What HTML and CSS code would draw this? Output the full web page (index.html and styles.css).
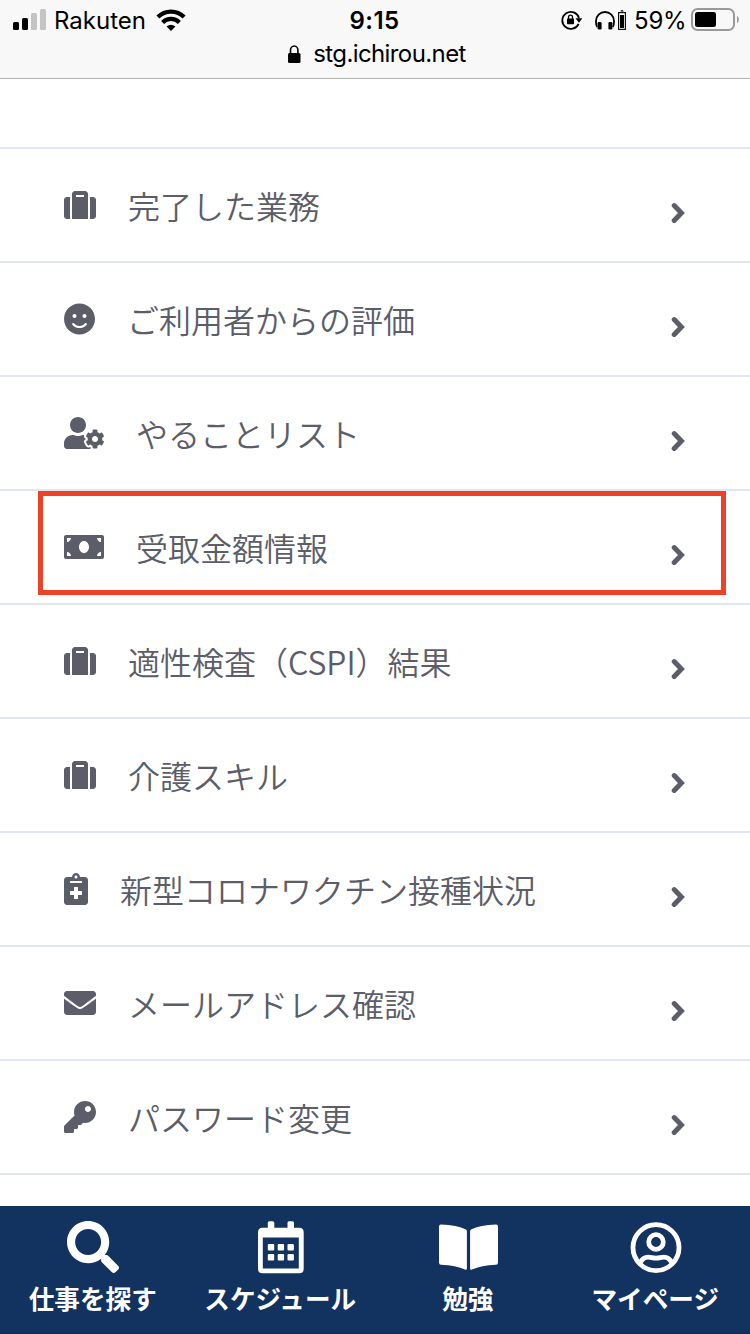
FILE: index.html
```html
<!DOCTYPE html>
<html lang="ja">
<head>
<meta charset="utf-8">
<title>マイページ</title>
<link rel="stylesheet" href="styles.css">
</head>
<body>
<svg class="defs" width="0" height="0">
  <symbol id="suitcase" viewBox="0 0 512 512"><path d="M128 480h256V80c0-26.5-21.5-48-48-48H176c-26.5 0-48 21.5-48 48v400zm64-384h128v32H192V96zm320 80v256c0 26.5-21.5 48-48 48h-48V128h48c26.5 0 48 21.5 48 48zM96 480H48c-26.5 0-48-21.5-48-48V176c0-26.5 21.5-48 48-48h48v352z"/></symbol>
  <symbol id="chevron" viewBox="0 0 14 22"><path d="M3.2 3.6 10.4 11l-7.200 7.400" fill="none" stroke="currentColor" stroke-width="5" stroke-linecap="round"/></symbol>
</svg>
<header class="browser">
  <div class="status">
    <div class="status-left">
      <svg class="signal" width="33" height="21" viewBox="0 0 33 21"><rect y="13" width="6" height="8" rx="1.5"/><rect x="9" y="9" width="6" height="12" rx="1.5"/><rect x="18" y="4" width="6" height="17" rx="1.5" fill="#c4c4c4"/><rect x="27" width="6" height="21" rx="1.5" fill="#c4c4c4"/></svg>
      <span class="carrier">Rakuten</span>
      <svg class="wifi" width="30" height="22" viewBox="0 0 30 22"><g fill="none" stroke="#000" stroke-width="4.200"><path d="M1.900 8a18.500 18.500 0 0 1 26.200 0"/><path d="M6.600 13.400a12 12 0 0 1 16.800 0"/></g><path d="M10.600 17.600a7 7 0 0 1 8.800 0L15 22z"/></svg>
    </div>
    <div class="clock">9:15</div>
    <div class="status-right">
      <svg class="rotation" width="21" height="20" viewBox="0 0 21 20"><path d="M17.600 13.800A8.500 8.500 0 1 1 18 8" fill="none" stroke="#000" stroke-width="1.800"/><path d="M14.500 8.200h7L18 12.800z"/><rect x="6" y="8.500" width="7" height="5.800" rx=".7"/><path d="M7.500 9V7.200a2 2 0 0 1 4 0V9" fill="none" stroke="#000" stroke-width="1.300"/></svg>
      <svg class="headphones" width="20" height="19" viewBox="0 0 20 19"><path d="M2.200 16C.7 14 1 11.500 1 10a9 9 0 0 1 18 0c0 1.500.3 4-1.200 6" fill="none" stroke="#000" stroke-width="1.800"/><rect x="2.600" y="11" width="4" height="7.500" rx="1.300"/><rect x="13.400" y="11" width="4" height="7.500" rx="1.300"/></svg>
      <svg class="device" width="8" height="20" viewBox="0 0 8 20"><path d="M2.500 1.500a1.500 1.500 0 0 1 3 0z"/><rect x=".6" y="2.600" width="6.800" height="16.800" fill="none" stroke="#000" stroke-width="1.100"/><rect x="2" y="5" width="4" height="13"/></svg>
      <span class="percent">59%</span>
      <svg class="battery" width="48" height="24" viewBox="0 0 48 24"><rect x="1" y="1" width="42" height="21" rx="5.500" fill="none" stroke="#999" stroke-width="2"/><rect x="4" y="4" width="21" height="15" rx="2.500"/><path d="M46 8c2.500 1 2.500 6 0 7z" fill="#999"/></svg>
    </div>
  </div>
  <div class="address">
    <svg width="13" height="18" viewBox="0 0 13 18"><rect y="8" width="12.500" height="10" rx="1.500"/><path d="M2.500 9V5.200a3.700 4.200 0 0 1 7.400 0V9" fill="none" stroke="#000" stroke-width="1.600"/></svg>
    <span>stg.ichirou.net</span>
  </div>
</header>
<main class="menu">
  <div class="item"><svg class="icon" width="32" height="32"><use href="#suitcase"/></svg><span class="label">完了した業務</span><svg class="chevron" width="14" height="22"><use href="#chevron"/></svg></div>
  <div class="item"><svg class="icon" width="31" height="32" viewBox="0 0 496 512"><path d="M248 8C111 8 0 119 0 256s111 248 248 248 248-111 248-248S385 8 248 8zm80 168c17.700 0 32 14.300 32 32s-14.300 32-32 32-32-14.300-32-32 14.300-32 32-32zm-160 0c17.700 0 32 14.300 32 32s-14.300 32-32 32-32-14.300-32-32 14.300-32 32-32zm194.800 170.200C334.300 380.400 292.500 400 248 400s-86.300-19.600-114.800-53.800c-13.600-16.300 11-36.700 24.600-20.500 22.400 26.900 55.200 42.200 90.200 42.200s67.800-15.400 90.200-42.200c13.400-16.200 38.100 4.200 24.600 20.500z"/></svg><span class="label">ご利用者からの評価</span><svg class="chevron" width="14" height="22"><use href="#chevron"/></svg></div>
  <div class="item"><svg class="icon" width="40" height="32" viewBox="0 0 640 512"><path d="M610.5 373.3c2.6-14.1 2.6-28.5 0-42.6l25.8-14.9c3-1.7 4.3-5.2 3.3-8.5-6.7-21.6-18.2-41.2-33.2-57.4-2.3-2.5-6-3.1-9-1.4l-25.8 14.9c-10.9-9.3-23.4-16.5-36.9-21.3v-29.8c0-3.4-2.4-6.4-5.7-7.1-22.3-5-45-4.8-66.2 0-3.3.7-5.7 3.7-5.7 7.1v29.8c-13.5 4.8-26 12-36.9 21.3l-25.8-14.9c-2.9-1.7-6.7-1.1-9 1.4-15 16.2-26.5 35.8-33.2 57.4-1 3.3.4 6.8 3.3 8.5l25.8 14.9c-2.6 14.1-2.6 28.5 0 42.6l-25.8 14.9c-3 1.7-4.3 5.2-3.3 8.5 6.7 21.6 18.2 41.1 33.2 57.4 2.3 2.5 6 3.1 9 1.4l25.8-14.9c10.9 9.3 23.4 16.5 36.9 21.3v29.8c0 3.4 2.4 6.4 5.7 7.1 22.3 5 45 4.8 66.2 0 3.3-.7 5.7-3.7 5.7-7.1v-29.8c13.5-4.8 26-12 36.9-21.3l25.8 14.9c2.9 1.7 6.7 1.1 9-1.4 15-16.2 26.5-35.8 33.2-57.4 1-3.3-.4-6.8-3.3-8.5l-25.8-14.9zM496 400.5c-26.8 0-48.5-21.8-48.5-48.5s21.8-48.5 48.5-48.5 48.5 21.8 48.5 48.5-21.7 48.500-48.500 48.500zM224 256c70.700 0 128-57.300 128-128S294.700 0 224 0 96 57.300 96 128s57.300 128 128 128zm201.200 226.500c-2.300-1.200-4.600-2.600-6.800-3.900l-7.900 4.600c-6 3.400-12.800 5.300-19.600 5.300-10.900 0-21.400-4.600-28.900-12.600-18.300-19.800-32.300-43.900-40.200-69.600-5.500-17.700 1.900-36.400 17.900-45.700l7.900-4.600c-.1-2.600-.1-5.200 0-7.800l-7.900-4.600c-16-9.200-23.400-28-17.900-45.700.9-2.900 2.200-5.800 3.200-8.700-3.800-.3-7.500-1.200-11.400-1.200h-16.700c-22.200 10.200-46.900 16-72.900 16s-50.600-5.800-72.900-16h-16.700C60.200 288 0 348.200 0 422.400V464c0 26.500 21.500 48 48 48h352c10.100 0 19.500-3.200 27.200-8.500-1.200-3.800-2-7.700-2-11.800v-9.200z"/></svg><span class="label">やることリスト</span><svg class="chevron" width="14" height="22"><use href="#chevron"/></svg></div>
  <div class="item marked"><svg class="icon" width="40" height="32" viewBox="0 0 640 512"><path d="M608 64H32C14.330 64 0 78.330 0 96v320c0 17.670 14.330 32 32 32h576c17.670 0 32-14.330 32-32V96c0-17.670-14.330-32-32-32zM48 400v-64c35.350 0 64 28.650 64 64H48zm0-224v-64h64c0 35.350-28.650 64-64 64zm272 176c-44.190 0-80-42.990-80-96 0-53.020 35.820-96 80-96s80 42.980 80 96c0 53.030-35.830 96-80 96zm272 48h-64c0-35.350 28.650-64 64-64v64zm0-224c-35.350 0-64-28.650-64-64h64v64z"/></svg><span class="label">受取金額情報</span><svg class="chevron" width="14" height="22"><use href="#chevron"/></svg></div>
  <div class="item"><svg class="icon" width="32" height="32"><use href="#suitcase"/></svg><span class="label">適性検査（CSPI）結果</span><svg class="chevron" width="14" height="22"><use href="#chevron"/></svg></div>
  <div class="item"><svg class="icon" width="32" height="32"><use href="#suitcase"/></svg><span class="label">介護スキル</span><svg class="chevron" width="14" height="22"><use href="#chevron"/></svg></div>
  <div class="item"><svg class="icon" width="24" height="32" viewBox="0 0 384 512"><path d="M336 64h-80c0-35.300-28.700-64-64-64s-64 28.700-64 64H48C21.500 64 0 85.500 0 112v352c0 26.500 21.500 48 48 48h288c26.500 0 48-21.500 48-48V112c0-26.500-21.500-48-48-48zM192 40c13.300 0 24 10.700 24 24s-10.700 24-24 24-24-10.700-24-24 10.700-24 24-24zm96 304c0 4.400-3.600 8-8 8h-56v56c0 4.400-3.600 8-8 8h-48c-4.400 0-8-3.600-8-8v-56h-56c-4.400 0-8-3.600-8-8v-48c0-4.400 3.600-8 8-8h56v-56c0-4.400 3.600-8 8-8h48c4.400 0 8 3.600 8 8v56h56c4.400 0 8 3.600 8 8v48zm0-192c0 4.400-3.600 8-8 8H104c-4.400 0-8-3.600-8-8v-16c0-4.400 3.600-8 8-8h176c4.400 0 8 3.600 8 8v16z"/></svg><span class="label">新型コロナワクチン接種状況</span><svg class="chevron" width="14" height="22"><use href="#chevron"/></svg></div>
  <div class="item"><svg class="icon" width="32" height="32" viewBox="0 0 512 512"><path d="M502.300 190.800c3.900-3.100 9.700-.2 9.700 4.700V400c0 26.500-21.500 48-48 48H48c-26.500 0-48-21.500-48-48V195.600c0-5 5.700-7.800 9.700-4.700 22.400 17.400 52.100 39.500 154.100 113.600 21.100 15.400 56.700 47.800 92.200 47.600 35.700.3 72-32.800 92.300-47.600 102-74.100 131.600-96.300 154-113.700zM256 320c23.200.4 56.600-29.200 73.400-41.400 132.700-96.300 142.800-104.700 173.400-128.700 5.800-4.500 9.200-11.500 9.200-18.900v-19c0-26.500-21.500-48-48-48H48c-26.500 0-48 21.500-48 48v19c0 7.400 3.400 14.300 9.200 18.900 30.600 23.900 40.700 32.400 173.400 128.700 16.800 12.200 50.200 41.800 73.400 41.400z"/></svg><span class="label">メールアドレス確認</span><svg class="chevron" width="14" height="22"><use href="#chevron"/></svg></div>
  <div class="item"><svg class="icon" width="32" height="32" viewBox="0 0 512 512"><path d="M512 176C512 273.200 433.200 352 336 352c-11.220 0-22.190-1.060-32.830-3.070l-24.010 27.010A24 24 0 0 1 261.220 384H224v40c0 13.260-10.740 24-24 24h-40v40c0 13.260-10.740 24-24 24H24c-13.260 0-24-10.740-24-24v-78.060c0-6.370 2.530-12.470 7.030-16.970l161.800-161.800C163.100 213.800 160 195.270 160 176 160 78.800 238.800 0 336 0 433.490 0 512 78.510 512 176zM336 128c0 26.510 21.490 48 48 48s48-21.490 48-48-21.490-48-48-48-48 21.490-48 48z"/></svg><span class="label">パスワード変更</span><svg class="chevron" width="14" height="22"><use href="#chevron"/></svg></div>
</main>
<nav class="tabs">
  <div class="tab"><svg class="search" width="52" height="53" viewBox="0 0 512 522"><path d="M505 442.700L405.300 343c-4.500-4.500-10.600-7-17-7H372c27.600-35.300 44-79.700 44-128C416 93.100 322.900 0 208 0S0 93.100 0 208s93.100 208 208 208c48.300 0 92.700-16.400 128-44v16.300c0 6.400 2.500 12.500 7 17l99.700 99.700c9.400 9.400 24.600 9.400 33.900 0l28.300-28.300c9.400-9.400 9.400-24.600.1-34zM208 336c-70.700 0-128-57.200-128-128 0-70.700 57.200-128 128-128 70.700 0 128 57.200 128 128 0 70.700-57.200 128-128 128z"/></svg><span>仕事を探す</span></div>
  <div class="tab"><svg width="46" height="53" viewBox="0 0 46 53"><path fill-rule="evenodd" d="M4.500 6.800h5.300V1.800Q9.800.3 11.300.3h3.500q1.500 0 1.500 1.500v5H29.500v-5q0-1.500 1.500-1.500h3.500q1.500 0 1.500 1.500v5h5.200q4.500 0 4.500 4.500v36.500q0 4.500-4.500 4.500H4.500Q0 52.300 0 47.800V11.300q0-4.500 4.500-4.500zM4.800 16.500v31h36v-31z"/><g><rect x="9.800" y="23" width="6.400" height="6.600" rx="1"/><rect x="19.700" y="23" width="6.400" height="6.600" rx="1"/><rect x="29.500" y="23" width="6.400" height="6.600" rx="1"/><rect x="9.800" y="33" width="6.400" height="6.600" rx="1"/><rect x="19.700" y="33" width="6.400" height="6.600" rx="1"/><rect x="29.500" y="33" width="6.400" height="6.600" rx="1"/></g></svg><span>スケジュール</span></div>
  <div class="tab"><svg width="59" height="53" viewBox="0 0 59 53"><path d="M0 5.400Q0 3.600 2 3.600 18 4.200 27 8.600q.9.500.9 1.600v37.200q0 2-1.900 1.200Q17 44.300 2 43.700q-2-.1-2-2zM59 5.400q0-1.800-2-1.800-16 .6-25 5-.9.500-.9 1.600v37.200q0 2 1.900 1.200 9-4.300 24-4.900 2-.1 2-2z"/></svg><span>勉強</span></div>
  <div class="tab"><svg width="52" height="53" viewBox="0 0 52 53"><g fill="none" stroke="#fff"><circle cx="26" cy="26.600" r="23" stroke-width="4.800"/><circle cx="26" cy="21" r="7.300" stroke-width="4.800"/><path d="M10.500 41.500c1.500-3.500 4-5.400 7.700-5.400 2.800 0 4.300 1 7.800 1s5-1 7.800-1c3.700 0 6.200 1.900 7.700 5.400" stroke-width="4.800"/></g></svg><span>マイページ</span></div>
</nav>
</body>
</html>
```
FILE: styles.css
```css
*, *::after { box-sizing: border-box; }
body {
  margin: 0;
  height: 1334px;
  display: flex;
  flex-direction: column;
  overflow: hidden;
  background: #fff;
  font-family: "Noto Sans CJK JP", sans-serif;
}
.defs { display: none; }
svg { display: block; flex: none; }
.browser {
  flex: none;
  height: 79px;
  background: #f8f8f8;
  border-bottom: 1px solid #b2b2b2;
  color: #000;
  font-family: Inter, "Liberation Sans", sans-serif;
  font-size: 24px;
  line-height: 32px;
}
.status {
  display: grid;
  grid-template-columns: 1fr 100px 1fr;
  height: 38px;
  padding: 5px 11px 0 13px;
}
.status-left, .status-right { display: flex; align-items: flex-start; }
.status-right { justify-content: flex-end; }
.signal { margin-top: 4px; }
.carrier { margin-left: 8px; width: 92px; white-space: nowrap; }
.wifi { margin: 4px 0 0 10px; }
.clock { padding-right: 3px; text-align: center; font-weight: 600; letter-spacing: .5px; }
.rotation { margin: 5px 13px 0 0; }
.headphones { margin: 6px 3px 0 0; }
.device { margin: 5px 8px 0 0; }
.percent { width: 52px; letter-spacing: -.2px; white-space: nowrap; }
.battery { margin: 3px 0 0 5px; }
.address {
  display: flex;
  justify-content: center;
  gap: 12px;
  padding-left: 4px;
  letter-spacing: -.6px;
}
.address svg { margin-top: 7px; }
.menu {
  flex: 1;
  padding-top: 68px;
}
.item {
  display: flex;
  align-items: flex-start;
  height: 114px;
  padding: 40px 65px 0 64px;
  border-top: 2px solid #e1e5f1;
  color: #5b5d69;
  position: relative;
}
.item:last-child { height: 116px; border-bottom: 2px solid #e1e5f1; }
.icon { fill: currentColor; }
.label {
  margin: -8px auto 0 32px;
  font-family: "Noto Sans CJK JP DemiLight", "Noto Sans CJK JP", sans-serif;
  font-size: 32px;
  line-height: 48px;
  font-weight: 350;
  white-space: nowrap;
}
.chevron { margin-top: 13px; }
/* Highlight frame drawn over the row */
.marked::after {
  content: "";
  position: absolute;
  top: 0;
  left: 38px;
  width: 688px;
  height: 104px;
  border: 5px solid #ee4125;
}
.tabs {
  flex: none;
  display: grid;
  grid-template-columns: repeat(4, 1fr);
  height: 128px;
  padding-top: 15px;
  background: #123260;
  border-bottom: 1px solid #0d264e;
  color: #fff;
}
.tab {
  display: flex;
  flex-direction: column;
  align-items: center;
  font-size: 25.6px;
  font-weight: 700;
  line-height: 38px;
  white-space: nowrap;
}
.tab svg { fill: #fff; }
.tab .search { margin-right: 2px; }
.tab span { margin: 5px 2px 0 0; }
```
